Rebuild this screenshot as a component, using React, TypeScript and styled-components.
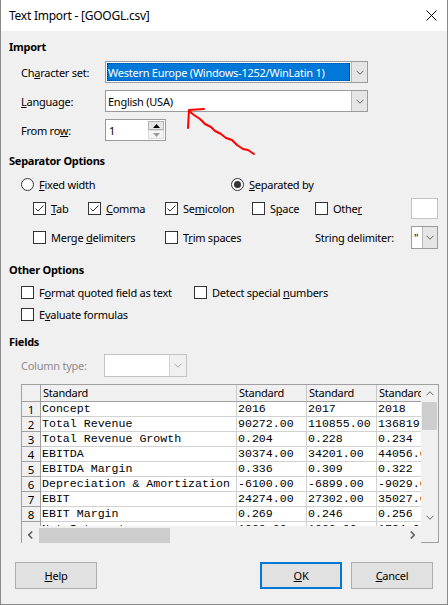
import React from 'react';
import styled, { createGlobalStyle } from 'styled-components';

const GlobalStyle = createGlobalStyle`
  html, body { margin: 0; padding: 0; background: #ffffff; }
  body { font-family: "Noto Sans", "Open Sans", sans-serif; font-size: 11px; letter-spacing: -0.25px; color: #000; }
  * { box-sizing: border-box; }
`;

const Window = styled.div`
  position: relative;
  width: 448px;
  height: 605px;
  background: #f0f0f0;
  border: 1px solid #8a8a8a;
  border-top: none;
  display: flex;
  flex-direction: column;
  overflow: hidden;
`;

const TitleBar = styled.div`
  height: 31px;
  flex: none;
  background: #ffffff;
  display: flex;
  align-items: center;
  justify-content: space-between;
  padding: 0 10px 0 8px;
  font-size: 12px;
`;

const Body = styled.div`
  flex: 1;
  display: flex;
  flex-direction: column;
  padding: 0 8px 14px 8px;
`;

const Heading = styled.div<{ $mt: number }>`
  margin-top: ${p => p.$mt}px;
  height: 16px;
  line-height: 16px;
  font-weight: bold;
`;

const Stack = styled.div<{ $mt: number; $gap: number }>`
  margin-top: ${p => p.$mt}px;
  display: flex;
  flex-direction: column;
  gap: ${p => p.$gap}px;
`;

const FieldRow = styled.div<{ $labelWidth: number; $mt?: number }>`
  margin-top: ${p => p.$mt ?? 0}px;
  display: grid;
  grid-template-columns: ${p => p.$labelWidth}px auto;
  align-items: center;
  height: ${p => (p.$mt ? 23 : 22)}px;
  padding-left: 12px;
`;

const Label = styled.span<{ $disabled?: boolean }>`
  color: ${p => (p.$disabled ? '#8d8d8d' : '#000')};
  white-space: nowrap;
`;

const Mn = styled.span`
  text-decoration: underline;
  text-underline-offset: 1px;
`;

const Combo = styled.div<{ $width: number; $height: number; $disabled?: boolean }>`
  width: ${p => p.$width}px;
  height: ${p => p.$height}px;
  display: flex;
  background: #ffffff;
  border: 1px solid ${p => (p.$disabled ? '#c4c4c4' : '#9a9a9a')};
`;

const ComboText = styled.div<{ $selected?: boolean }>`
  flex: 1;
  min-width: 0;
  display: flex;
  align-items: center;
  padding-left: ${p => (p.$selected ? 1 : 2)}px;
  margin: ${p => (p.$selected ? '1px 1px 1px 1px' : '0')};
  white-space: nowrap;
  overflow: hidden;
  background: ${p => (p.$selected ? '#0078d7' : 'transparent')};
  color: ${p => (p.$selected ? '#ffffff' : '#000')};
  outline: ${p => (p.$selected ? '1px dotted #222' : 'none')};
  outline-offset: -1px;
`;

const ComboButton = styled.div<{ $width: number; $disabled?: boolean }>`
  width: ${p => p.$width}px;
  flex: none;
  display: flex;
  align-items: center;
  justify-content: center;
  background: ${p => (p.$disabled ? '#f0f0f0' : '#e5e5e5')};
  border-left: 1px solid ${p => (p.$disabled ? '#d4d4d4' : '#b9b9b9')};
`;

const Chevron = ({ dir = 'down', color = '#5f5f5f' }: { dir?: 'down' | 'up' | 'left' | 'right'; color?: string }) => {
  const pts: Record<string, string> = {
    down: '0.5,0.5 4,4 7.5,0.5',
    up: '0.5,4 4,0.5 7.5,4',
    left: '4,0.5 0.5,4 4,7.5',
    right: '0.5,0.5 4,4 0.5,7.5',
  };
  const vertical = dir === 'down' || dir === 'up';
  return (
    <svg width={vertical ? 8 : 5} height={vertical ? 5 : 8} viewBox={vertical ? '0 0 8 4.5' : '0 0 4.5 8'}>
      <polyline points={pts[dir]} fill="none" stroke={color} strokeWidth={vertical ? 1 : 1.6} />
    </svg>
  );
};

const SpinBox = styled.div`
  width: 61px;
  height: 22px;
  background: #ffffff;
  border: 1px solid #9a9a9a;
  display: flex;
  align-items: center;
  padding: 1px 1px 1px 3px;
`;

const SpinValue = styled.div`
  flex: 1;
`;

const SpinButtons = styled.div`
  width: 16px;
  height: 18px;
  display: flex;
  flex-direction: column;
`;

const SpinButton = styled.div<{ $disabled?: boolean }>`
  flex: 1;
  display: flex;
  align-items: center;
  justify-content: center;
  background: ${p => (p.$disabled ? '#f4f4f4' : '#e5e5e5')};
  border: 1px solid ${p => (p.$disabled ? '#dcdcdc' : '#b4b4b4')};
`;

const Triangle = ({ up, color }: { up?: boolean; color: string }) => (
  <svg width="7" height="4" viewBox="0 0 7 4">
    <polygon points={up ? '0,4 7,4 3.5,0' : '0,0 7,0 3.5,4'} fill={color} />
  </svg>
);

const RadioRow = styled.div`
  margin-top: 7px;
  height: 16px;
  display: grid;
  grid-template-columns: 210px auto;
  align-items: center;
  padding-left: 12px;
`;

const Choice = styled.label<{ $gap: number }>`
  display: flex;
  align-items: center;
  gap: ${p => p.$gap}px;
  white-space: nowrap;
`;

const RadioCircle = styled.span<{ $checked?: boolean }>`
  width: 13px;
  height: 13px;
  border-radius: 50%;
  border: 1px solid #333;
  background: #fff;
  display: flex;
  align-items: center;
  justify-content: center;
  flex: none;
  &::after {
    content: '';
    width: 7px;
    height: 7px;
    border-radius: 50%;
    background: ${p => (p.$checked ? '#333' : 'transparent')};
  }
`;

const Box = styled.span`
  width: 13px;
  height: 13px;
  border: 1px solid #333;
  background: #fff;
  flex: none;
  display: flex;
  align-items: center;
  justify-content: center;
`;

const CheckBox = ({ checked }: { checked?: boolean }) => (
  <Box>
    {checked && (
      <svg width="11" height="11" viewBox="0 0 11 11">
        <polyline points="1.5,5.5 4,8 9.5,2.5" fill="none" stroke="#333" strokeWidth="1" />
      </svg>
    )}
  </Box>
);

const SepGrid = styled.div`
  margin-top: 5px;
  display: grid;
  grid-template-columns: 55px 77px 87px 63px 96px 27px;
  grid-template-rows: 22px 23px;
  row-gap: 7px;
  align-items: center;
  padding-left: 24px;
`;

const Cell = styled.div<{ $span?: number }>`
  grid-column: span ${p => p.$span ?? 1};
  display: flex;
  align-items: center;
  height: 100%;
`;

const TextInput = styled.div`
  width: 27px;
  height: 21px;
  background: #fff;
  border: 1px solid #c4c4c4;
`;

const OptionsGrid = styled.div`
  margin-top: 6px;
  display: grid;
  grid-template-columns: 173px auto;
  grid-auto-rows: 16px;
  row-gap: 6px;
  align-items: center;
  padding-left: 12px;
`;

const TableFrame = styled.div`
  margin: 7px 0 0 12px;
  height: 159px;
  border: 1px solid #a0a0a0;
  border-bottom: none;
  display: grid;
  grid-template-columns: 1fr 17px;
  grid-template-rows: 1fr 17px;
`;

const Viewport = styled.div`
  overflow: hidden;
  background: #ffffff;
  min-width: 0;
  min-height: 0;
`;

const DataGrid = styled.div`
  display: grid;
  grid-template-columns: 19px 196px 70px 70px 70px;
  grid-template-rows: 17px;
  grid-auto-rows: 15px;
  width: max-content;
`;

const CornerCell = styled.div`
  background: #f0f0f0;
  border-right: 1px solid #a0a0a0;
  border-bottom: 1px solid #a0a0a0;
`;

const HeaderCell = styled.div`
  background: #f0f0f0;
  border-right: 1px solid #c8c8c8;
  border-bottom: 1px solid #a0a0a0;
  padding-left: 2px;
  line-height: 16px;
  white-space: nowrap;
  overflow: hidden;
`;

const RowHeader = styled.div`
  background: #f0f0f0;
  border-right: 1px solid #a0a0a0;
  border-bottom: 1px solid #a0a0a0;
  text-align: center;
  line-height: 16px;
  font-size: 11.5px;
  overflow: hidden;
`;

const DataCell = styled.div`
  border-right: 1px solid #d2d2d2;
  border-bottom: 1px solid #d2d2d2;
  font-family: "Liberation Mono", "DejaVu Sans Mono", monospace;
  font-size: 11.6px;
  letter-spacing: 0;
  line-height: 13px;
  padding-left: 1px;
  white-space: nowrap;
  overflow: hidden;
`;

const VScroll = styled.div`
  background: #f0f0f0;
  display: flex;
  flex-direction: column;
`;

const HScroll = styled.div`
  background: #f0f0f0;
  display: flex;
  align-items: stretch;
`;

const ScrollArrow = styled.div`
  flex: none;
  width: 17px;
  height: 17px;
  display: flex;
  align-items: center;
  justify-content: center;
`;

const Thumb = styled.div<{ $vertical?: boolean; $size: number }>`
  background: #cdcdcd;
  flex: none;
  ${p =>
    p.$vertical
      ? `height: ${p.$size}px; margin: 0 1px;`
      : `width: ${p.$size}px; margin: 2px 0 0 0;`}
`;

const Spacer = styled.div`
  flex: 1;
`;

const ScrollCorner = styled.div`
  background: #f0f0f0;
  border-bottom: 1px solid #a0a0a0;
`;

const Footer = styled.div`
  margin-top: 19px;
  display: flex;
  gap: 9px;
  padding: 0 6px;
`;

const Button = styled.div<{ $default?: boolean }>`
  width: 82px;
  height: 27px;
  display: flex;
  align-items: center;
  justify-content: center;
  background: #e1e1e1;
  border: ${p => (p.$default ? '2px solid #0078d7' : '1px solid #adadad')};
`;

const Annotation = styled.svg`
  position: absolute;
  left: 0;
  top: 0;
  pointer-events: none;
`;

const rows: string[][] = [
  ['Concept', '2016', '2017', '2018'],
  ['Total Revenue', '90272.00', '110855.00', '136819.00'],
  ['Total Revenue Growth', '0.204', '0.228', '0.234'],
  ['EBITDA', '30374.00', '34201.00', '44056.00'],
  ['EBITDA Margin', '0.336', '0.309', '0.322'],
  ['Depreciation & Amortization', '-6100.00', '-6899.00', '-9029.00'],
  ['EBIT', '24274.00', '27302.00', '35027.00'],
  ['EBIT Margin', '0.269', '0.246', '0.256'],
  ['Net Interest', '1000.00', '1000.00', '1784.00'],
];

export default function App() {
  return (
    <>
      <GlobalStyle />
      <Window>
        <TitleBar>
          <span>Text Import - [GOOGL.csv]</span>
          <svg width="11" height="11" viewBox="0 0 11 11">
            <path d="M0.5 0.5 L10.5 10.5 M10.5 0.5 L0.5 10.5" stroke="#000" strokeWidth="1" />
          </svg>
        </TitleBar>
        <Body>
          <Heading $mt={8}>Import</Heading>
          <Stack $mt={6} $gap={7}>
            <FieldRow $labelWidth={84}>
              <Label>Ch<Mn>a</Mn>racter set:</Label>
              <Combo $width={263} $height={22}>
                <ComboText $selected>Western Europe (Windows-1252/WinLatin 1)</ComboText>
                <ComboButton $width={16}><Chevron /></ComboButton>
              </Combo>
            </FieldRow>
            <FieldRow $labelWidth={84}>
              <Label><Mn>L</Mn>anguage:</Label>
              <Combo $width={263} $height={22}>
                <ComboText>English (USA)</ComboText>
                <ComboButton $width={16}><Chevron /></ComboButton>
              </Combo>
            </FieldRow>
            <FieldRow $labelWidth={84}>
              <Label>From ro<Mn>w</Mn>:</Label>
              <SpinBox>
                <SpinValue>1</SpinValue>
                <SpinButtons>
                  <SpinButton><Triangle up color="#000" /></SpinButton>
                  <SpinButton $disabled><Triangle color="#9a9a9a" /></SpinButton>
                </SpinButtons>
              </SpinBox>
            </FieldRow>
          </Stack>

          <Heading $mt={12}>Separator Options</Heading>
          <RadioRow>
            <Choice $gap={5}><RadioCircle /><span><Mn>F</Mn>ixed width</span></Choice>
            <Choice $gap={5}><RadioCircle $checked /><span><Mn>S</Mn>eparated by</span></Choice>
          </RadioRow>
          <SepGrid>
            <Cell><Choice $gap={5}><CheckBox checked /><span><Mn>T</Mn>ab</span></Choice></Cell>
            <Cell><Choice $gap={5}><CheckBox checked /><span><Mn>C</Mn>omma</span></Choice></Cell>
            <Cell><Choice $gap={5}><CheckBox checked /><span>Se<Mn>m</Mn>icolon</span></Choice></Cell>
            <Cell><Choice $gap={5}><CheckBox /><span>S<Mn>p</Mn>ace</span></Choice></Cell>
            <Cell><Choice $gap={5}><CheckBox /><span>Othe<Mn>r</Mn></span></Choice></Cell>
            <Cell><TextInput /></Cell>
            <Cell $span={2}><Choice $gap={5}><CheckBox /><span>Merge <Mn>d</Mn>elimiters</span></Choice></Cell>
            <Cell $span={2}><Choice $gap={5}><CheckBox /><span>T<Mn>r</Mn>im spaces</span></Choice></Cell>
            <Cell><Label>Strin<Mn>g</Mn> delimiter:</Label></Cell>
            <Cell>
              <Combo $width={27} $height={23}>
                <ComboText>"</ComboText>
                <ComboButton $width={15}><Chevron /></ComboButton>
              </Combo>
            </Cell>
          </SepGrid>

          <Heading $mt={13}>Other Options</Heading>
          <OptionsGrid>
            <Choice $gap={5}><CheckBox /><span>F<Mn>o</Mn>rmat quoted field as text</span></Choice>
            <Choice $gap={5}><CheckBox /><span>Detect special <Mn>n</Mn>umbers</span></Choice>
            <Choice $gap={5}><CheckBox /><span>E<Mn>v</Mn>aluate formulas</span></Choice>
          </OptionsGrid>

          <Heading $mt={12}>Fields</Heading>
          <FieldRow $labelWidth={83} $mt={4}>
            <Label $disabled>Column type:</Label>
            <Combo $width={83} $height={23} $disabled>
              <ComboText />
              <ComboButton $width={17} $disabled><Chevron color="#a8a8a8" /></ComboButton>
            </Combo>
          </FieldRow>

          <TableFrame>
            <Viewport>
              <DataGrid>
                <CornerCell />
                <HeaderCell>Standard</HeaderCell>
                <HeaderCell>Standard</HeaderCell>
                <HeaderCell>Standard</HeaderCell>
                <HeaderCell>Standard</HeaderCell>
                {rows.map((r, i) => (
                  <React.Fragment key={i}>
                    <RowHeader>{i + 1}</RowHeader>
                    {r.map((c, j) => (
                      <DataCell key={j}>{c}</DataCell>
                    ))}
                  </React.Fragment>
                ))}
              </DataGrid>
            </Viewport>
            <VScroll>
              <ScrollArrow><Chevron dir="up" color="#606060" /></ScrollArrow>
              <Thumb $vertical $size={28} />
              <Spacer />
              <ScrollArrow><Chevron dir="down" color="#606060" /></ScrollArrow>
            </VScroll>
            <HScroll>
              <ScrollArrow><Chevron dir="left" color="#606060" /></ScrollArrow>
              <Thumb $size={131} />
              <Spacer />
              <ScrollArrow><Chevron dir="right" color="#606060" /></ScrollArrow>
            </HScroll>
            <ScrollCorner />
          </TableFrame>

          <Footer>
            <Button><span><Mn>H</Mn>elp</span></Button>
            <Spacer />
            <Button $default><span><Mn>O</Mn>K</span></Button>
            <Button><span><Mn>C</Mn>ancel</span></Button>
          </Footer>
        </Body>
        <Annotation width="448" height="605" viewBox="0 0 448 605">
          <polyline
            points="253,154 247,150 242,149 236,145 231,140 225,138 220,134 214,131 210,127 204,124 199,119 193,115 188,111"
            fill="none"
            stroke="#ff0000"
            strokeWidth="2"
            strokeLinecap="round"
            strokeLinejoin="round"
          />
          <polyline
            points="203,109 188,110 187,128"
            fill="none"
            stroke="#ff0000"
            strokeWidth="2"
            strokeLinecap="round"
            strokeLinejoin="round"
          />
        </Annotation>
      </Window>
    </>
  );
}
